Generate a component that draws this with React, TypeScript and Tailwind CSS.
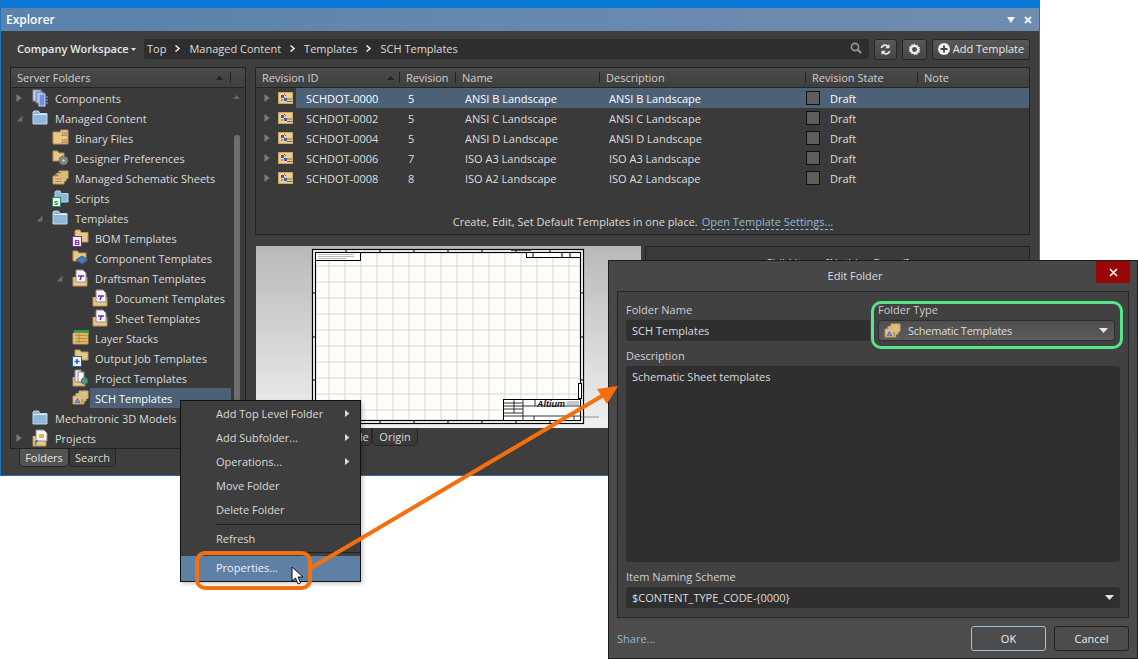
import React from "react";

const FONT = "font-['Open_Sans','Noto_Sans',sans-serif]";

function Svg({ children, w = 18, h = 18 }: { children: React.ReactNode; w?: number; h?: number }) {
  return (
    <svg width={w} height={h} viewBox={`0 0 ${w} ${h}`} className="shrink-0 block">
      {children}
    </svg>
  );
}

function BlueFolder() {
  return (
    <Svg>
      <path d="M1 3 V15 H15 V4.5 H8 L6.5 2 H2 Z" fill="#8fb7d8" stroke="#bcd8ee" strokeWidth="1" />
      <path d="M1.5 5.5 H14.5" stroke="#dcecf8" strokeWidth="1" />
    </Svg>
  );
}
function ComponentsIcon() {
  return (
    <Svg>
      <rect x="1" y="1" width="8" height="11" fill="#cfd8e6" stroke="#7a8fb5" />
      <rect x="4" y="3" width="7" height="11" fill="#a8b8d8" stroke="#6a80a8" />
      <rect x="7" y="5" width="6" height="12" fill="#6f8fe8" stroke="#cfd8f5" />
      <path d="M14 8h2M14 11h2M14 14h2" stroke="#9aa" strokeWidth="1" />
    </Svg>
  );
}
function BinaryIcon() {
  return (
    <Svg>
      <path d="M1 3 V15 H16 V1 H9 L8 3 Z" fill="#e8c886" stroke="#b8925a" />
      <text x="9" y="7" fontSize="5.5" fill="#7a5a30" fontFamily="Liberation Sans">10</text>
      <text x="9" y="13.5" fontSize="5.5" fill="#7a5a30" fontFamily="Liberation Sans">10</text>
    </Svg>
  );
}
function PrefsIcon() {
  return (
    <Svg>
      <path d="M1 2 V12 H12 V4 H7 L5.5 2 Z" fill="#e8c886" stroke="#b8925a" />
      <circle cx="11.5" cy="11.5" r="4.5" fill="#8a8a8a" stroke="#555" strokeDasharray="2 1" />
      <circle cx="11.5" cy="11.5" r="2" fill="#c8c8c8" stroke="#666" />
    </Svg>
  );
}
function StackIcon() {
  return (
    <Svg>
      <path d="M1 7 H12 V15 H1 Z" fill="#e8c886" stroke="#b8925a" />
      <path d="M4 4.5 H14 V12 H12 M4 7 V4.5" fill="#dcbd80" stroke="#c8a870" />
      <path d="M7 2 H16 V9.5 H14 M7 4.5 V2" fill="#dcbd80" stroke="#c8a870" />
      <path d="M3 10h7M3 12.5h7" stroke="#a8844c" strokeWidth="1" />
    </Svg>
  );
}
function ScriptsIcon() {
  return (
    <Svg>
      <path d="M3 3 V13 H16 V4.5 H9 L8 2 H4 Z" fill="#8fb7d8" stroke="#bcd8ee" />
      <rect x="0.5" y="8.5" width="8" height="9" fill="#f4f8f4" stroke="#2a8a6a" />
      <text x="2" y="16" fontSize="7.5" fontWeight="bold" fill="#1e7a5a" fontFamily="Liberation Sans">s</text>
    </Svg>
  );
}
function BomIcon() {
  return (
    <Svg>
      <path d="M3 2 V13 H16 V3.5 H9 L8 1 H4 Z" fill="#e8c886" stroke="#b8925a" />
      <rect x="0.5" y="7.5" width="9" height="10" fill="#f4f0f8" stroke="#7a2a9a" />
      <text x="2.5" y="15.5" fontSize="7.5" fontWeight="bold" fill="#6a2a8a" fontFamily="Liberation Sans">B</text>
    </Svg>
  );
}
function CompTplIcon() {
  return (
    <Svg>
      <path d="M1 2 V12 H14 V4 H7 L5.5 2 Z" fill="#e8c886" stroke="#b8925a" />
      <path d="M10 7 L16 11 L10 15 L4 11 Z" fill="#4a78b8" stroke="#2e5a98" />
    </Svg>
  );
}
function DraftsmanIcon() {
  return (
    <Svg>
      <path d="M1 8 V17 H15 V8" fill="#e8c886" stroke="#b8925a" />
      <path d="M4 1 H11 L14 4 V13 H4 Z" fill="#f6f6fa" stroke="#8a8a9a" />
      <path d="M6 7 H12 M9.5 7 L8 11" stroke="#7a2aa8" strokeWidth="1.5" />
    </Svg>
  );
}
function LayerIcon() {
  return (
    <Svg>
      <rect x="2" y="1" width="15" height="5" fill="#2f9a4a" />
      <path d="M1 4 H16 V15 H1 Z" fill="#e8c886" stroke="#b8925a" />
      <path d="M3 6.5h12M3 9.5h12M3 12.5h12" stroke="#c98a2a" strokeWidth="1.5" />
      <path d="M7 5V14" stroke="#8a9a3a" strokeWidth="1" />
    </Svg>
  );
}
function OutputIcon() {
  return (
    <Svg>
      <path d="M3 1 V11 H16 V3 H9 L8 1 Z" fill="#e8c886" stroke="#b8925a" />
      <rect x="0.5" y="7.5" width="9" height="10" fill="#f0f4fa" stroke="#2a5aa8" />
      <path d="M5 10v5M2.5 12.5h5" stroke="#2a5aa8" strokeWidth="1.5" />
    </Svg>
  );
}
function ProjTplIcon() {
  return (
    <Svg>
      <path d="M1 8 V17 H13 V8" fill="#e8c886" stroke="#b8925a" />
      <path d="M3 1 H9 V13 H3 Z" fill="#f0f0f0" stroke="#888" />
      <path d="M6 3 H12 V13 H6 Z" fill="#f8f8f8" stroke="#888" />
      <circle cx="12.5" cy="12" r="3.2" fill="#5a9a5a" stroke="#3a6aa8" />
    </Svg>
  );
}
function ProjectsIcon() {
  return (
    <Svg>
      <path d="M1 7 V17 H14 V7" fill="#e8c886" stroke="#b8925a" />
      <path d="M4 1 H12 L15 4 V12 H4 Z" fill="#f6f6fa" stroke="#8a8a9a" />
      <rect x="7" y="5" width="5" height="4" fill="#e8b830" />
      <text x="2.5" y="15.5" fontSize="7.5" fontStyle="italic" fontWeight="bold" fill="#2a5aa8" fontFamily="Liberation Sans">f</text>
    </Svg>
  );
}
function SchStackIcon() {
  return (
    <Svg>
      <path d="M1 7 H12 V15 H1 Z" fill="#e8c886" stroke="#b8925a" />
      <path d="M4 7 V4.5 H14 V12 H12" fill="#dcbd80" stroke="#c8a870" />
      <path d="M7 4.5 V2 H16 V9.5 H14" fill="#dcbd80" stroke="#c8a870" />
      <path d="M3 13.5 L5.5 9 L8 13.5 Z" fill="#7a8ad8" stroke="#5a5ab0" strokeWidth="0.7" />
      <path d="M9 11h2M9 13h2" stroke="#8a6a3a" />
    </Svg>
  );
}
function RowIcon() {
  return (
    <svg width="15" height="12" viewBox="0 0 15 12" className="shrink-0 block">
      <rect x="0" y="0" width="15" height="12" fill="#edd08e" />
      <rect x="0.5" y="0.5" width="14" height="11" fill="none" stroke="#c8a868" />
      <path d="M3 3h3v3H3zM6 6h3v3H6z" fill="#3a5ac8" />
      <path d="M6 2l2 2M3 8h2" stroke="#c83a5a" strokeWidth="1" />
      <path d="M9 7h5M9 9.5h5" stroke="#666" strokeWidth="1" />
    </svg>
  );
}
function Tri({ open }: { open?: boolean }) {
  return open ? (
    <svg width="7" height="7" viewBox="0 0 7 7" className="block"><path d="M6.5 0.5V6.5H0.5Z" fill="#6a6a6a" /></svg>
  ) : (
    <svg width="6" height="8" viewBox="0 0 6 8" className="block"><path d="M0.5 0V8L5.5 4Z" fill="#7a7a7a" /></svg>
  );
}
function MenuArrow() {
  return <svg width="5" height="7" viewBox="0 0 5 7" className="block"><path d="M0 0V7L4.5 3.5Z" fill="#d8d8d8" /></svg>;
}
function Caret({ cls = "" }: { cls?: string }) {
  return <svg width="9" height="5" viewBox="0 0 9 5" className={"block shrink-0 " + cls}><path d="M0 0H9L4.5 5Z" fill="#e6e6e6" /></svg>;
}

type TreeItem = { label: string; pad: string; tri?: "open" | "closed"; icon: React.ReactNode; sel?: boolean };
const tree: TreeItem[] = [
  { label: "Components", pad: "pl-[5px]", tri: "closed", icon: <ComponentsIcon /> },
  { label: "Managed Content", pad: "pl-[5px]", tri: "open", icon: <BlueFolder /> },
  { label: "Binary Files", pad: "pl-[25px]", icon: <BinaryIcon /> },
  { label: "Designer Preferences", pad: "pl-[25px]", icon: <PrefsIcon /> },
  { label: "Managed Schematic Sheets", pad: "pl-[25px]", icon: <StackIcon /> },
  { label: "Scripts", pad: "pl-[25px]", icon: <ScriptsIcon /> },
  { label: "Templates", pad: "pl-[25px]", tri: "open", icon: <BlueFolder /> },
  { label: "BOM Templates", pad: "pl-[45px]", icon: <BomIcon /> },
  { label: "Component Templates", pad: "pl-[45px]", icon: <CompTplIcon /> },
  { label: "Draftsman Templates", pad: "pl-[45px]", tri: "open", icon: <DraftsmanIcon /> },
  { label: "Document Templates", pad: "pl-[65px]", icon: <DraftsmanIcon /> },
  { label: "Sheet Templates", pad: "pl-[65px]", icon: <DraftsmanIcon /> },
  { label: "Layer Stacks", pad: "pl-[45px]", icon: <LayerIcon /> },
  { label: "Output Job Templates", pad: "pl-[45px]", icon: <OutputIcon /> },
  { label: "Project Templates", pad: "pl-[45px]", icon: <ProjTplIcon /> },
  { label: "SCH Templates", pad: "pl-[45px]", icon: <SchStackIcon />, sel: true },
  { label: "Mechatronic 3D Models", pad: "pl-[5px]", icon: <BlueFolder /> },
  { label: "Projects", pad: "pl-[5px]", tri: "closed", icon: <ProjectsIcon /> },
];

const rows = [
  ["SCHDOT-0000", "5", "ANSI B Landscape"],
  ["SCHDOT-0002", "5", "ANSI C Landscape"],
  ["SCHDOT-0004", "5", "ANSI D Landscape"],
  ["SCHDOT-0006", "7", "ISO A3 Landscape"],
  ["SCHDOT-0008", "8", "ISO A2 Landscape"],
];

function Sheet() {
  const vs = Array.from({ length: 16 }, (_, i) => 17 + i * 16);
  const hs = Array.from({ length: 10 }, (_, i) => 17 + i * 16);
  const ticks = [34, 68, 102, 136, 170, 204, 238];
  return (
    <svg width="272" height="175" viewBox="0 0 272 175" className="block shrink-0 overflow-visible">
      <rect x="0.5" y="0.5" width="271" height="174" fill="#fffdf9" stroke="#000" strokeWidth="1.2" />
      {vs.map((x) => <path key={x} d={`M${x} 4V171`} stroke="#ddd7d1" strokeWidth="1" />)}
      {hs.map((y) => <path key={y} d={`M4 ${y}H268`} stroke="#ddd7d1" strokeWidth="1" />)}
      <rect x="3.5" y="3.5" width="265" height="168" fill="none" stroke="#000" strokeWidth="1.2" />
      {ticks.map((x) => <path key={x} d={`M${x} 0V4M${x} 171V175`} stroke="#000" />)}
      {[44, 88, 131].map((y) => <path key={y} d={`M0 ${y}H4M268 ${y}H272`} stroke="#000" />)}
      <rect x="3.5" y="3.5" width="45" height="8" fill="#fff" stroke="#000" />
      <path d="M6 5.5h36M6 7.5h36M6 9.5h28" stroke="#777" strokeWidth="0.5" />
      <rect x="214.5" y="3.5" width="54" height="5" fill="#fff" stroke="#000" />
      <path d="M221 4v4M250 4v4M258 4v4" stroke="#000" />
      <path d="M199 1h20" stroke="#222" strokeWidth="1.5" />
      <rect x="191.5" y="150.5" width="77" height="21" fill="#fff" stroke="#000" />
      <path d="M191 154h20M191 157h20M191 160h20M191 164h20M191 167h77M211 150v22M202 150v14M223 150v7M211 157h57M222 167v5M262 167v5" stroke="#000" strokeWidth="0.8" />
      <text x="225" y="158" fontSize="9" fontWeight="bold" fontStyle="italic" fill="#111" fontFamily="Liberation Sans">Altium</text>
      <path d="M255 153h12M255 155h12" stroke="#444" strokeWidth="0.6" />
      <path d="M269 168h18" stroke="#666" strokeWidth="0.7" />
      <rect x="266.5" y="134.5" width="3" height="15" fill="#fff" stroke="#000" />
    </svg>
  );
}

function Button({ children, cls }: { children: React.ReactNode; cls: string }) {
  return (
    <div className={"h-[21px] shrink-0 flex items-center justify-center rounded-[3px] border border-[#262626] bg-gradient-to-b from-[#585858] to-[#454545] " + cls}>
      {children}
    </div>
  );
}

function MenuRow({ label, arrow, active }: { label: string; arrow?: boolean; active?: boolean }) {
  return (
    <div className={"flex items-center justify-between pl-[35px] pr-[10px] " + (active ? "h-[25px] pb-[2px] bg-[#5f80a5] text-[#eef2f6]" : "h-6")}>
      <span>{label}</span>
      {arrow && <MenuArrow />}
    </div>
  );
}

function Tab({ label, w, active }: { label: string; w: string; active?: boolean }) {
  return (
    <div className={"h-[18px] flex items-center justify-center rounded-b-[5px] border border-t-0 border-[#262626] " + w + " " + (active ? "bg-[#535353] text-[#e4e4e4]" : "bg-[#3a3a3a]")}>
      {label}
    </div>
  );
}

export default function App() {
  return (
    <div className={"relative w-[1138px] h-[659px] overflow-hidden bg-white text-[11px] leading-none text-[#dcdcdc] " + FONT}>
      {/* Explorer window */}
      <div className="absolute left-0 top-0 w-[1040px] h-[476px] flex flex-col bg-[#3e3e3e] border-x border-b border-x-[#1a76c0] border-b-[#2c6a9c]">
        <div className="h-2 shrink-0 bg-[#0a78d6]" />
        <div className="h-[23px] shrink-0 flex items-center justify-between pl-[5px] pr-[7px] bg-gradient-to-r from-[#5b82ac] to-[#6f8dae] text-[12px] font-semibold text-white">
          <span>Explorer</span>
          <div className="flex items-center gap-[9px]">
            <svg width="8" height="6" viewBox="0 0 8 6"><path d="M0 0H8L4 6Z" fill="#f0f4f8" /></svg>
            <svg width="8" height="8" viewBox="0 0 8 8"><path d="M1 1L7 7M7 1L1 7" stroke="#f0f4f8" strokeWidth="2" /></svg>
          </div>
        </div>

        {/* Toolbar */}
        <div className="h-[36px] shrink-0 flex items-center pl-4 pr-[9px]">
          <span className="w-[110px] shrink-0 pb-[2px] whitespace-nowrap font-semibold text-[#e8e8e8]">Company Workspace</span>
          <Caret cls="ml-[4px] w-[5px] h-[3px]" />
          <div className="ml-[8px] w-[725px] shrink-0 h-5 flex items-center rounded-[3px] bg-[#2e2e2e] pl-[3px] pr-[7px] pb-[2px]">
            <span>Top</span>
            <Sep />
            <span>Managed Content</span>
            <Sep />
            <span>Templates</span>
            <Sep />
            <span>SCH Templates</span>
            <svg width="12" height="12" viewBox="0 0 12 12" className="ml-auto"><circle cx="5" cy="5" r="3.6" fill="none" stroke="#9a9a9a" strokeWidth="1.6" /><path d="M7.8 7.8L11 11" stroke="#9a9a9a" strokeWidth="2" /></svg>
          </div>
          <Button cls="ml-[5px] w-[23px]">
            <svg width="13" height="13" viewBox="0 0 13 13"><path d="M1.5 5a4.5 4.5 0 0 1 7.5-2.6L10.5 1v4.2H6.3l1.5-1.5A3 3 0 0 0 3.2 5Z" fill="#e8e8e8" /><path d="M11.5 8a4.5 4.5 0 0 1-7.5 2.6L2.5 12V7.8h4.2l-1.5 1.5A3 3 0 0 0 9.8 8Z" fill="#e8e8e8" /></svg>
          </Button>
          <Button cls="ml-[5px] w-[25px]">
            <svg width="13" height="13" viewBox="0 0 24 24"><path d="M12 1l2 3.2 3.6-1 .6 3.7 3.7.6-1 3.6L23 12l-2.1 1.9 1 3.6-3.7.6-.6 3.7-3.6-1L12 23l-2-3.2-3.6 1-.6-3.7-3.7-.6 1-3.6L1 12l2.1-1.9-1-3.6 3.7-.6.6-3.7 3.6 1Z" fill="#ececec" /><circle cx="12" cy="12" r="4.5" fill="#4c4c4c" /></svg>
          </Button>
          <Button cls="ml-[5px] w-[98px] gap-[3px]">
            <svg width="12" height="12" viewBox="0 0 12 12"><circle cx="6" cy="6" r="6" fill="#f0f0f0" /><path d="M6 2.5v7M2.5 6h7" stroke="#444" strokeWidth="1.8" /></svg>
            <span className="pb-[2px] text-[#e8e8e8]">Add Template</span>
          </Button>
        </div>

        <div className="flex-1 min-h-0 flex pl-[9px] pr-[9px]">
          {/* Left */}
          <div className="w-[236px] shrink-0 flex flex-col">
            <div className="h-[382px] shrink-0 flex flex-col border border-[#222] bg-[#3a3a3a]">
              <div className="h-5 shrink-0 flex items-center justify-between pl-[6px] border-b border-[#252525] bg-gradient-to-b from-[#4a4a4a] to-[#3f3f3f] text-[#cfcfcf]">
                <span>Server Folders</span>
                <div className="flex items-center gap-[7px] mr-[14px]">
                  <svg width="7" height="4" viewBox="0 0 7 4"><path d="M0 4H7L3.5 0Z" fill="#222" /></svg>
                  <div className="w-px h-[11px] bg-[#222]" />
                </div>
              </div>
              <div className="flex-1 min-h-0 flex">
                <div className="flex-1 min-w-0">
                  {tree.map((t) => (
                    <div key={t.label} className={"h-5 flex items-center " + t.pad}>
                      <div className="w-[17px] h-5 shrink-0 flex items-center">
                        {t.tri && <Tri open={t.tri === "open"} />}
                      </div>
                      <div className="w-[23px] -ml-px h-5 shrink-0 flex items-center">{t.icon}</div>
                      <span className={"h-5 flex-1 flex items-center pl-[5px] -ml-[5px] " + (t.sel ? "bg-[#4c6076] text-white" : "")}>{t.label}</span>
                    </div>
                  ))}
                </div>
                <div className="w-[14px] shrink-0 flex flex-col items-center pr-[3px] pt-[7px]">
                  <svg width="7" height="4" viewBox="0 0 7 4" className="shrink-0"><path d="M0 4H7L3.5 0Z" fill="#666" /></svg>
                  <div className="mt-[36px] w-[6px] h-[306px] bg-[#6e6e6e] rounded-t-[3px]" />
                </div>
              </div>
            </div>
            <div className="flex pl-[9px]">
              <Tab label="Folders" w="w-[50px]" active />
              <Tab label="Search" w="w-[47px]" />
            </div>
          </div>

          {/* Right */}
          <div className="flex-1 min-w-0 ml-[9px] flex flex-col">
            <div className="h-[168px] shrink-0 flex flex-col border border-[#222] bg-[#3a3a3a]">
              <div className="h-5 shrink-0 flex items-center border-b border-[#252525] bg-gradient-to-b from-[#4a4a4a] to-[#3f3f3f] text-[#cfcfcf]">
                <Head w="w-[144px]" label="Revision ID" sort />
                <Head w="w-[56px]" label="Revision" />
                <Head w="w-[144px]" label="Name" />
                <Head w="w-[206px]" label="Description" />
                <Head w="w-[112px]" label="Revision State" />
                <div className="pl-[6px]">Note</div>
              </div>
              <div>
                {rows.map((r, i) => (
                  <div key={r[0]} className="h-5 flex items-center">
                    <div className="w-[22px] pl-[8px] shrink-0"><Tri /></div>
                    <div className="w-[18px] shrink-0"><RowIcon /></div>
                    <div className={"flex-1 h-5 flex items-center text-[#dedede] " + (i === 0 ? "bg-[#4c6076] text-white" : "")}>
                      <span className="w-[112px] pl-[10px] shrink-0">{r[0]}</span>
                      <span className="w-[57px] shrink-0">{r[1]}</span>
                      <span className="w-[144px] shrink-0">{r[2]}</span>
                      <span className="w-[197px] shrink-0">{r[2]}</span>
                      <span className="w-[14px] h-[14px] shrink-0 border border-[#111] bg-[#5e5e5e]" />
                      <span className="ml-[10px]">Draft</span>
                    </div>
                  </div>
                ))}
                <div className="mt-[28px] flex justify-center gap-[4px] pl-[1px]">
                  <span>Create, Edit, Set Default Templates in one place.</span>
                  <span className="text-[#8fb8dc] border-b border-dashed border-[#8fb8dc] pb-[2px]">Open Template Settings...</span>
                </div>
              </div>
            </div>
            <div className="mt-[11px] flex h-[182px] shrink-0">
              <div className="ml-px w-[385px] shrink-0 pl-[56px] pt-[3px] bg-gradient-to-b from-[#b9b9b9] to-[#f0f0f0]">
                <Sheet />
              </div>
              <div className="flex-1 ml-[4px] border border-[#222] bg-[#3a3a3a] flex justify-center pt-[10px]">
                <span>Child Items [Nothing Found]</span>
              </div>
            </div>
            <div className="flex pl-[67px]">
              <Tab label="Lifecycle" w="w-[50px]" />
              <Tab label="Origin" w="w-[46px]" />
            </div>
          </div>
        </div>
      </div>

      {/* Context menu */}
      <div className="absolute left-[180px] top-[400px] w-[181px] h-[182px] flex flex-col border border-[#111] bg-[#3e3e3e] text-[#dadada] shadow-[2px_2px_4px_rgba(0,0,0,0.2)]">
        <MenuRow label="Add Top Level Folder" arrow />
        <MenuRow label="Add Subfolder..." arrow />
        <MenuRow label="Operations..." arrow />
        <MenuRow label="Move Folder" />
        <MenuRow label="Delete Folder" />
        <div className="ml-[35px] h-px mt-[3px] bg-[#222]" />
        <div className="flex items-center h-[27px] pl-[35px]">Refresh</div>
        <div className="ml-[35px] h-px bg-[#222]" />
        <div className="mt-[3px]"><MenuRow label="Properties..." active /></div>
      </div>

      {/* Dialog */}
      <div className="absolute left-[608px] top-[260px] w-[530px] h-[399px] flex flex-col border border-[#1c1c1c] bg-gradient-to-b from-[#474747] to-[#4c4c4c]">
        <div className="h-[30px] shrink-0 flex items-start relative">
          <span className="flex-1 text-center pt-[9px] pr-[36px] text-[#dcdcdc]">Edit Folder</span>
          <div className="absolute right-[7px] top-0 w-[34px] h-[22px] bg-[#9a0606] flex items-center justify-center">
            <svg width="9" height="9" viewBox="0 0 9 9"><path d="M1 1L8 8M8 1L1 8" stroke="#fff" strokeWidth="1.6" /></svg>
          </div>
        </div>
        <div className="mx-2 h-[327px] shrink-0 border border-[#262626] bg-[#414141] px-2 pt-[11px] flex flex-col">
          <div className="flex gap-[8px]">
            <div className="w-[244px] shrink-0 flex flex-col">
              <span className="h-[13px] flex items-center text-[#cfcfcf]">Folder Name</span>
              <div className="mt-[4px] h-[21px] flex items-center rounded-[3px] bg-[#2f2f2f] pl-[6px]">SCH Templates</div>
            </div>
            <div className="flex-1 flex flex-col pr-[5px]">
              <span className="h-[13px] flex items-center text-[#cfcfcf]">Folder Type</span>
              <div className="mt-[4px] h-[21px] flex items-center rounded-[3px] bg-gradient-to-b from-[#4e4e4e] to-[#5c5c5c] border border-[#303030] pl-[5px] pr-[6px]">
                <SchStackIcon />
                <span className="ml-[6px] flex-1 tracking-[-0.25px]">Schematic Templates</span>
                <Caret />
              </div>
            </div>
          </div>
          <span className="mt-[8px] h-[13px] flex items-center text-[#cfcfcf]">Description</span>
          <div className="mt-[4px] h-[196px] shrink-0 rounded-[3px] bg-[#2f2f2f] pl-[6px] pt-[5px]">Schematic Sheet templates</div>
          <span className="mt-[8px] h-[13px] flex items-center text-[#cfcfcf]">Item Naming Scheme</span>
          <div className="mt-[4px] h-[21px] flex items-center justify-between rounded-[3px] bg-[#2f2f2f] pl-[6px] pr-[6px]">
            <span>$CONTENT_TYPE_CODE-{"{0000}"}</span>
            <Caret />
          </div>
        </div>
        <div className="flex-1 flex items-center pl-2 pr-2">
          <span className="text-[#8fb8dc]">Share...</span>
          <div className="ml-auto w-[75px] h-[25px] flex items-center justify-center rounded-[3px] border border-[#9fc4e0] bg-[#4c4c4c] text-[#eee]">OK</div>
          <div className="ml-2 w-[75px] h-[25px] flex items-center justify-center rounded-[3px] border border-[#222] bg-[#4c4c4c] text-[#eee]">Cancel</div>
        </div>
      </div>

      {/* Callout highlights */}
      <div className="absolute left-[195px] top-[551px] w-[117px] h-[39px] rounded-[10px] border-[4px] border-[#f36f10]" />
      <div className="absolute left-[871px] top-[301px] w-[252px] h-[48px] rounded-[10px] border-[3px] border-[#57e587]" />
      <svg width="330" height="210" viewBox="0 0 330 210" className="absolute left-[300px] top-[375px]">
        <path d="M11 193 L302 21" stroke="#f36f10" strokeWidth="4" fill="none" />
        <path d="M318 11 L297 14 L307 29 Z" fill="#f36f10" />
      </svg>
      {/* Cursor */}
      <svg width="14" height="20" viewBox="0 0 14 20" className="absolute left-[291px] top-[566px]">
        <path d="M1 1V15L4.5 12L7 18L9.5 17L7 11H12Z" fill="#fff" stroke="#111" strokeWidth="1" />
      </svg>
    </div>
  );
}

function Sep() {
  return (
    <svg width="5" height="7" viewBox="0 0 5 7" className="mx-[9px] shrink-0"><path d="M0.5 0.5L4 3.5L0.5 6.5" fill="none" stroke="#e8e8e8" strokeWidth="1.5" /></svg>
  );
}

function Head({ w, label, sort }: { w: string; label: string; sort?: boolean }) {
  return (
    <div className={"relative flex items-center justify-between pl-[6px] pr-[6px] h-full shrink-0 " + w}>
      <span>{label}</span>
      {sort && <svg width="7" height="4" viewBox="0 0 7 4"><path d="M0 4H7L3.5 0Z" fill="#222" /></svg>}
      <div className="absolute right-0 top-[4px] w-px h-[11px] bg-[#222]" />
    </div>
  );
}
